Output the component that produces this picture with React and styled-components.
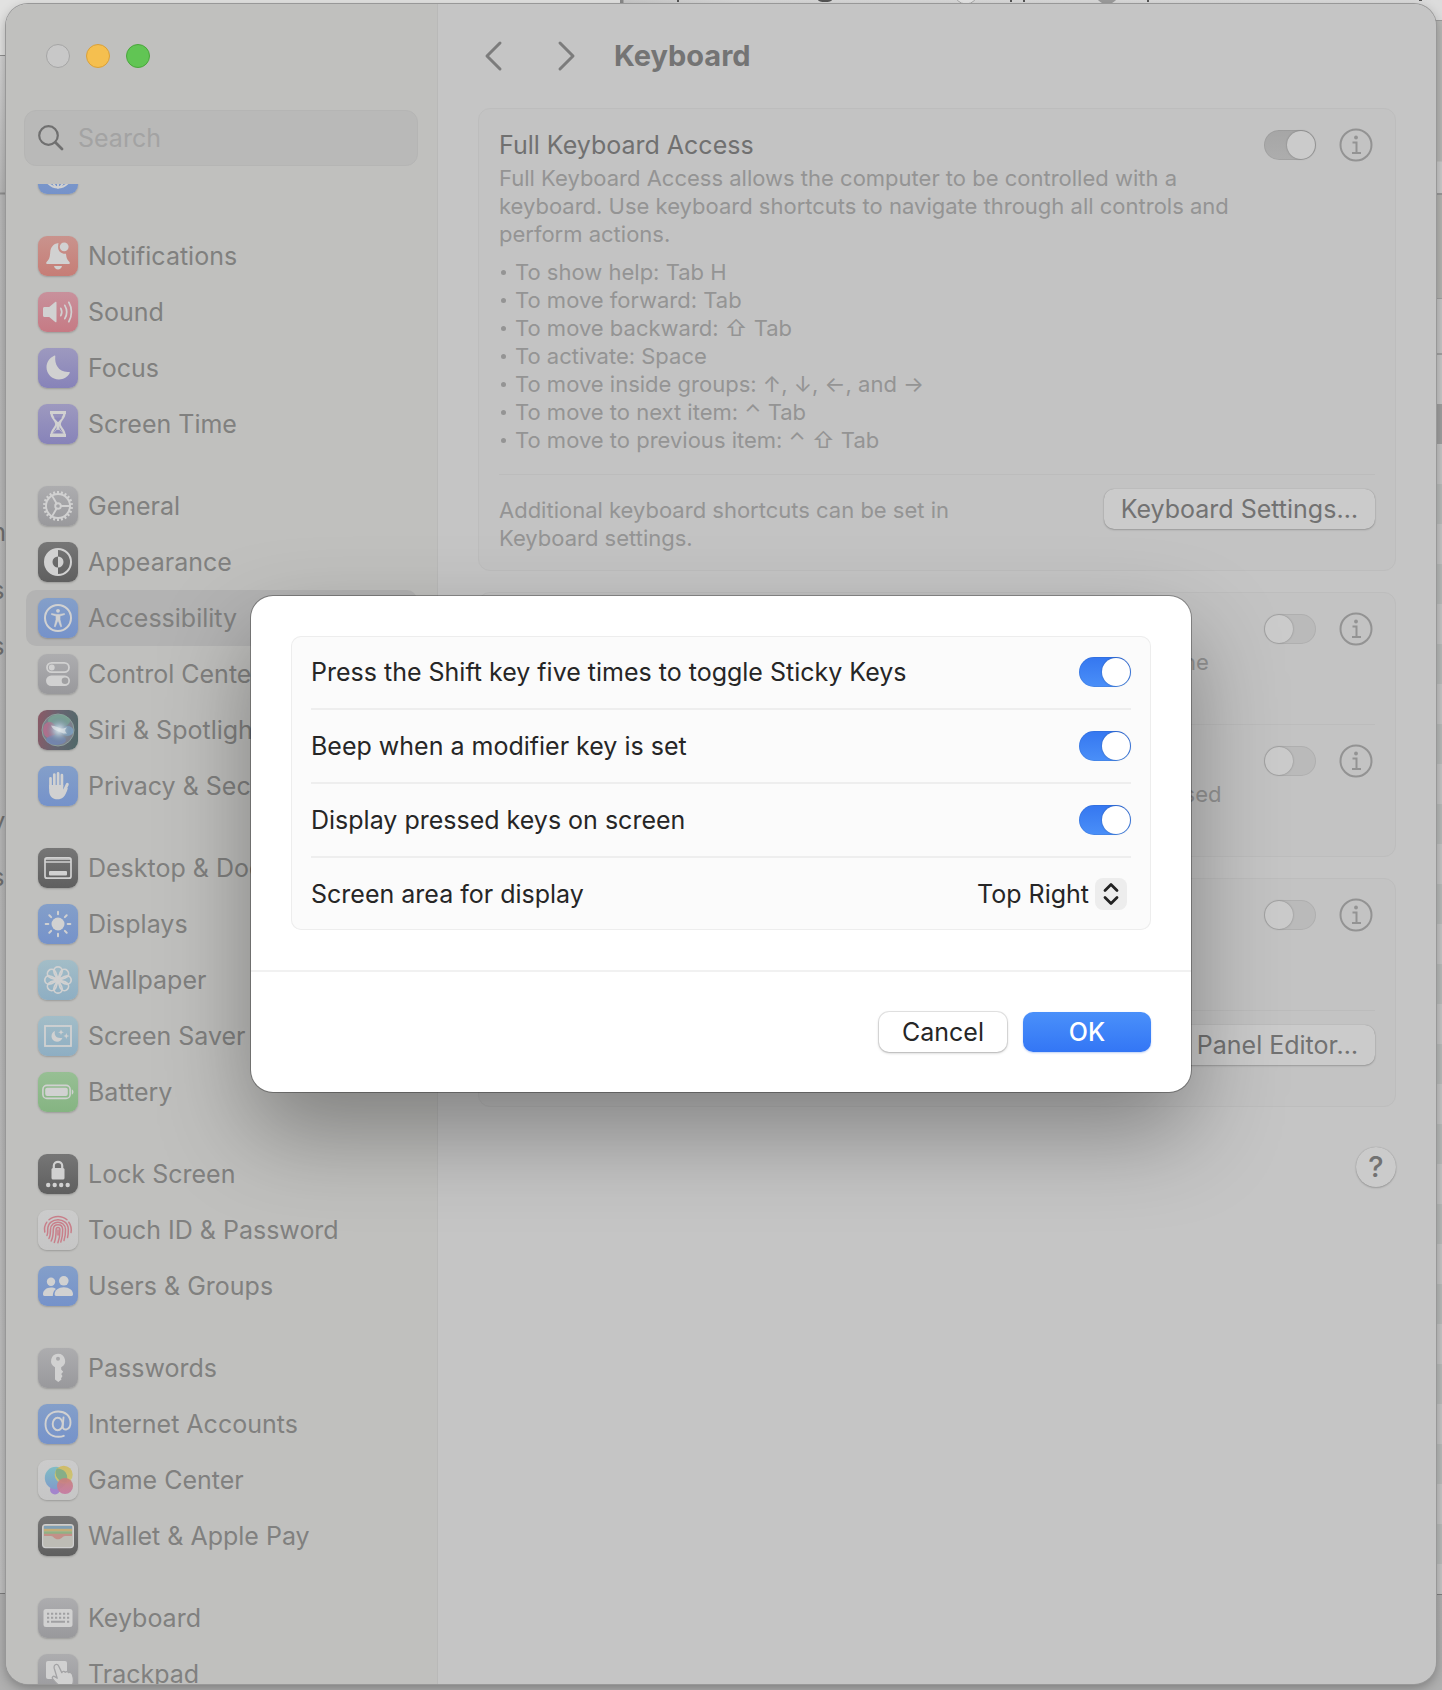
import React from "react";
import styled, { createGlobalStyle, css } from "styled-components";

const GlobalStyle = createGlobalStyle`
  *, *::before, *::after { box-sizing: border-box; }
  html, body { margin: 0; height: 100%; }
  body {
    font-family: Inter, "Liberation Sans", sans-serif;
    font-size: 25px;
    line-height: 30px;
    background: #b4b4b4;
    overflow: hidden;
  }
  button, input, select { font: inherit; }
  h1, h2, p, ul { margin: 0; padding: 0; }
`;

/* ---------- Desktop behind the window ---------- */

const Desktop = styled.div`
  position: relative;
  height: 100vh;
  padding: 4px 6px 6px;
  overflow: hidden;
  background: linear-gradient(#b4b4b4, #b0b0b0);
`;

const BackTop = styled.div`
  position: absolute;
  inset: 0 0 auto 0;
  height: 56px;
  background: linear-gradient(90deg, #e2e2e1 620px, #8a8a8a 620px, #8a8a8a 623px, #cacaca 624px, #d8d8d8 740px, #dcdcdc);
`;

const BackLeft = styled.div`
  position: absolute;
  left: 0;
  top: 55px;
  bottom: 96px;
  width: 40px;
  border-top: 1px solid #8f8f8f;
  border-bottom: 1px solid #7d7d7d;
  background: linear-gradient(#d2d2d2, #b9b9b9 136px, #8f8f8f 137px, #8f8f8f 138px, #bababa 139px, #b6b6b6 700px, #c0c0c0);
`;

const BackRight = styled.div`
  position: absolute;
  right: 0;
  top: 20px;
  bottom: 95px;
  width: 40px;
  border-top: 1px solid #9b9b9b;
  border-bottom: 1px solid #808080;
  background:
    linear-gradient(#b8b8b6 140px, #cbcbcb 141px, #cbcbcb 172px, #999 172px, #999 174px, #b5b5b2 174px,
      #b5b5b2 277px, #a2a2a2 277px, #a2a2a2 278px, #c6c6c6 278px, #c6c6c6 332px, #a2a2a2 332px, #a2a2a2 334px,
      #c8c8c8 334px, #c8c8c8 383px, #a0a0a0 383px, #a0a0a0 423px, transparent 423px),
    repeating-linear-gradient(#c6c6c6 0 40px, #b9bbba 40px 80px) 0 23px;
`;

const BackLetters = styled.div`
  position: absolute;
  left: 0;
  top: 517px;
  width: 6px;
  display: grid;
  grid-template-rows: 58px 56px 56px 119px 56px 30px;
  justify-content: end;
  overflow: hidden;
  color: #70706f;
`;

const BackMarks = styled.svg`
  position: absolute;
  left: 0;
  top: 0;
`;

function Backdrop() {
  return (
    <>
      <BackTop />
      <BackLeft />
      <BackRight />
      <BackLetters aria-hidden="true">
        <span>n</span><span>s</span><span>s</span><span>l</span><span>y</span><span>s</span>
      </BackLetters>
      <BackMarks width="1442" height="5" aria-hidden="true">
        <g fill="#555">
          <rect x="677" width="2" height="2" />
          <rect x="1010" width="2" height="2" />
          <rect x="1023" width="2" height="2" />
          <rect x="1147" width="2" height="2" />
          <rect x="1419" width="3" height="1" />
          <ellipse cx="825" cy="0" rx="7" ry="2" />
        </g>
        <circle cx="966" cy="-8" r="12" fill="#e6e6e6" stroke="#aaa" />
        <circle cx="1107" cy="-8" r="12" fill="#9d9d9d" />
      </BackMarks>
    </>
  );
}

/* ---------- Window ---------- */

const Window = styled.div`
  position: relative;
  display: flex;
  height: 100%;
  border-radius: 22px;
  overflow: hidden;
  background: #c5c5c5;
`;

const Frame = styled.div`
  position: relative;
  height: 100%;
  border-radius: 22px;
  box-shadow: 0 0 0 1px #989898, 0 4px 12px rgba(0, 0, 0, 0.3);
`;

const Sidebar = styled.aside`
  flex: 0 0 432px;
  display: flex;
  flex-direction: column;
  min-width: 0;
  min-height: 0;
  background: #c0c0be;
  border-right: 1px solid #b9b9b8;
`;

const Lights = styled.div`
  display: flex;
  gap: 16px;
  padding: 40px 40px 42px;
`;

const Light = styled.button`
  width: 24px;
  height: 24px;
  padding: 0;
  border-radius: 50%;
  border: 1px solid ${(p) => p.$edge};
  background: ${(p) => p.$fill};
`;

const SearchBox = styled.label`
  display: flex;
  align-items: center;
  gap: 14px;
  height: 56px;
  margin: 0 19px 18px 18px;
  padding: 0 13px;
  border: 1px solid #b5b5b4;
  border-radius: 12px;
  background: #b9b9b8;
  svg { flex: none; }
`;

const SearchInput = styled.input`
  flex: 1;
  min-width: 0;
  padding: 0;
  border: 0;
  outline: 0;
  background: none;
  color: #707070;
  &::placeholder { color: #a3a3a3; opacity: 1; }
`;

const NavScroll = styled.nav`
  flex: 1;
  min-height: 0;
  overflow: hidden;
`;

const NavGroups = styled.div`
  display: flex;
  flex-direction: column;
  gap: 26px;
  margin-top: -38px;
  padding: 0 20px;
`;

const NavGroup = styled.ul`
  list-style: none;
`;

const NavLink = styled.a`
  display: flex;
  align-items: center;
  gap: 10px;
  height: 56px;
  padding: 0 12px;
  border-radius: 10px;
  color: #80807f;
  text-decoration: none;
  white-space: nowrap;
  background: ${(p) => (p.$active ? "#b3b3b3" : "none")};
`;

const tones = {
  red: "linear-gradient(#c9938d, #c67d76)",
  pink: "linear-gradient(#c8919c, #c67a84)",
  violet: "linear-gradient(#9d99bf, #8783b9)",
  grey: "linear-gradient(#adadaf, #99999c)",
  black: "linear-gradient(#767676, #5f5f5f)",
  blue: "linear-gradient(#849fc9, #7592ca)",
  cyan: "linear-gradient(#a3bdc7, #8eaec3)",
  green: "linear-gradient(#97bf94, #85b482)",
  white: "linear-gradient(#cbcbcb, #c6c6c6)",
  siri: "linear-gradient(100deg, #8c5a66, #666571 50%, #4f6868)",
};

const Tile = styled.span`
  flex: none;
  width: 40px;
  height: 40px;
  border-radius: 9px;
  background: ${(p) => tones[p.$tone]};
  box-shadow: 0 1px 2px rgba(0, 0, 0, 0.2);
  svg { display: block; }
`;

/* ---------- Sidebar glyphs, drawn on a 40 × 40 grid ---------- */

const G = "#d1d1d1";
const line = { fill: "none", stroke: G, strokeLinecap: "round", strokeLinejoin: "round" };
const around = (n) => Array.from({ length: n }, (_, i) => (i * 360) / n);

const glyphs = {
  globe: (
    <g {...line} strokeWidth="1.8">
      <circle cx="20" cy="20" r="13.5" />
      <ellipse cx="20" cy="20" rx="6.5" ry="13.5" />
      <path d="M20 6.5v27M6.5 20h27M9 12.5c6 3.500 16 3.500 22 0M9 27.500c6-3.500 16-3.500 22 0" />
    </g>
  ),
  bell: (
    <g fill={G}>
      <path d="M20.500 7c-5.500.7-8 4.500-8.300 9.500-.3 5-1 6.800-3.200 9-1.300 1.300-1 2.500.5 2.500h21c1.500 0 1.800-1.200.5-2.500-1.900-1.900-2.700-3.700-3-7.700-4.300.5-7.700-2.400-7.900-6-.1-2 .2-3.500.4-4.800z" />
      <circle cx="26.200" cy="10.800" r="4.400" />
      <path d="M16 30h8c-.5 2.200-2 3.500-4 3.500S16.500 32.200 16 30z" />
    </g>
  ),
  speaker: (
    <>
      <path fill={G} d="M6.500 15h4.700l6-5c.8-.6 1.300-.3 1.300.6v18.800c0 .9-.5 1.200-1.300.6l-6-5H6.500c-.9 0-1.500-.6-1.500-1.500v-7c0-.9.6-1.500 1.500-1.500z" />
      <path {...line} strokeWidth="1.700" d="M22.800 16.300c1.200 2.200 1.200 5.200 0 7.400M26.800 13.300c2.300 4 2.300 9.400 0 13.400M30.800 10.300c3.500 5.800 3.500 13.600 0 19.400" />
    </>
  ),
  moon: <path fill={G} d="M17.300 8.300c-1 7.500 3.200 16.500 13.700 15.700.7 0 1 .5.700 1.100C29.700 29 25.600 31.500 21 31.500c-6.900 0-12.500-5.400-12.500-12.200 0-4.800 2.900-9.300 7.600-11.500.8-.4 1.300-.1 1.200.5z" />,
  hourglass: (
    <>
      <path fill="none" stroke={G} strokeWidth="2.200" strokeLinejoin="round" d="M13.500 8.500h13c.5 5.500-4.800 7.500-4.800 11.500s5.300 6 4.800 11.500h-13c-.5-5.500 4.800-7.500 4.800-11.500s-5.300-6-4.800-11.500z" />
      <path fill={G} d="M12 7h16v3H12zM12 30h16v3H12zM15 14h10l-3.500 4.500V25l4.500 5.500H14l4.500-5.500v-6.500z" />
      <path fill="#8d89ba" d="M15.800 13.800h8.400L20 18.200zM20 24.500l5 5H15z" />
      <path stroke={G} strokeWidth="1.600" d="M20 18v8" />
    </>
  ),
  gear: (
    <g {...line} strokeWidth="1.900">
      <circle cx="20" cy="20" r="12" />
      <circle cx="20" cy="20" r="2.800" />
      {around(22).map((a) => <path key={a} strokeWidth="2" strokeLinecap="butt" d="M20 5v3" transform={`rotate(${a} 20 20)`} />)}
      {[90, 210, 330].map((a) => <path key={a} d="M20 17.200V8" transform={`rotate(${a} 20 20)`} />)}
    </g>
  ),
  appearance: (
    <>
      <circle cx="20" cy="20" r="13" fill="none" stroke={G} strokeWidth="2" />
      <path fill={G} d="M20 7a13 13 0 0 0 0 26v-7.500a5.500 5.500 0 0 1 0-11z" />
      <path fill={G} d="M20 14.500a5.500 5.500 0 0 1 0 11z" />
    </>
  ),
  person: (
    <>
      <circle cx="20" cy="20" r="13" fill="none" stroke={G} strokeWidth="2" />
      <circle cx="20" cy="12.800" r="1.900" fill={G} />
      <path fill={G} stroke={G} strokeWidth=".6" strokeLinejoin="round" d="M13.500 15.600l5 .8h3l5-.8.1 1-4.600 1.300v3.800l1.700 6.800-1 .3-2.400-6h-.6l-2.400 6-1-.3 1.700-6.800v-3.800l-4.600-1.300z" />
    </>
  ),
  switches: (
    <>
      <rect x="9" y="8.800" width="22" height="9.400" rx="4.700" fill="none" stroke={G} strokeWidth="1.800" />
      <circle cx="13.800" cy="13.500" r="2.900" fill={G} />
      <rect x="8" y="21.500" width="24" height="10.500" rx="5.250" fill={G} />
      <circle cx="27" cy="26.700" r="3.300" fill="#a0a0a2" />
    </>
  ),
  siri: (
    <>
      <defs>
        <radialGradient id="orb"><stop offset="0" stopColor="#e0eaf0" /><stop offset=".4" stopColor="#a6b8c8" stopOpacity=".85" /><stop offset="1" stopColor="#6b8497" stopOpacity="0" /></radialGradient>
      </defs>
      <circle cx="20" cy="20" r="16" fill="#7d808c" stroke="#8da09c" strokeWidth="1" />
      <ellipse cx="21" cy="11" rx="11" ry="6.500" fill="#78ab96" opacity=".7" />
      <ellipse cx="11.500" cy="20" rx="6.500" ry="8" fill="#c2698b" opacity=".7" />
      <ellipse cx="18" cy="30" rx="10" ry="5" fill="#6f87bd" opacity=".65" />
      <ellipse cx="29.500" cy="21" rx="6" ry="5" fill="#7da3c4" opacity=".8" />
      <circle cx="21" cy="20" r="13" fill="url(#orb)" />
      <path fill="#dfe6e8" d="M13 15.500c5 .5 7 2 10 3 3 .5 4-1 6-1-2.500 1.800-2.500 4 0 6-4 .5-5.500-1-8-2-4-1.500-6-2-8-6z" opacity=".7" />
    </>
  ),
  hand: (
    <g {...line}>
      <path strokeWidth="2.700" d="M12.500 22V12.300M16.300 20V8.600M20.100 20V7.400M23.900 20V9.200" />
      <path strokeWidth="3" d="M29.300 18.300l-3.500 7.500" />
      <path fill={G} stroke="none" d="M11.150 19h14.100v4.500l4.700-1.500c-1.300 4-2.700 7.500-4.700 9.300-1.600 1.400-3.500 2-5.500 2-5.500 0-8.600-3.300-8.600-8.800z" />
    </g>
  ),
  dock: (
    <>
      <rect x="7" y="9.800" width="26" height="20.400" rx="2" fill="none" stroke={G} strokeWidth="1.700" />
      <path d="M7 11.200h26M7 14h26" stroke={G} strokeWidth="1.300" />
      <rect x="11" y="23" width="18" height="4.500" rx="1" fill={G} />
    </>
  ),
  sun: (
    <>
      <circle cx="20" cy="20" r="6.500" fill={G} />
      {around(8).map((a) => <path key={a} {...line} strokeWidth="2" d="M20 7.700v2.600" transform={`rotate(${a} 20 20)`} />)}
    </>
  ),
  flower: (
    <g fill="none" stroke={G} strokeWidth="1.700">
      {around(8).map((a) => <path key={a} d="M20 20c-1.200-3-4.200-5.300-4.200-9a4.200 4.200 0 0 1 8.400 0c0 3.700-3 6-4.200 9z" transform={`rotate(${a} 20 20)`} />)}
      <circle cx="20" cy="20" r="2.600" />
    </g>
  ),
  saver: (
    <>
      <rect x="7" y="10" width="26" height="20" fill="none" stroke={G} strokeWidth="1.800" />
      <path fill={G} d="M17 15c-1.500 5 2.500 8 7.500 6.700-1 2.500-3 4-5.400 4-3.300 0-5.600-2.400-5.600-5.400 0-2.400 1.300-4.400 3.500-5.300zM23 13.500l.8 2 2 .8-2 .8-.8 2-.8-2-2-.8 2-.8zM28.300 17l.8 2.200 2.200.8-2.200.8-.8 2.200-.8-2.200-2.200-.8 2.200-.8z" />
    </>
  ),
  battery: (
    <>
      <rect x="4.900" y="13.400" width="27.200" height="13" rx="4" fill="none" stroke={G} strokeWidth="1.600" />
      <rect x="7.200" y="15.700" width="22.600" height="8.400" rx="2" fill={G} />
      <path fill={G} d="M33.800 17.500c2.200.6 2.200 4.400 0 5z" />
    </>
  ),
  lock: (
    <>
      <path d="M15.800 15v-3.200c0-5.200 8.400-5.200 8.400 0V15" fill="none" stroke={G} strokeWidth="2.200" />
      <rect x="13.500" y="14" width="13" height="11.500" rx="1.600" fill={G} />
      {[10.200, 16.700, 23.200, 29.700].map((x) => <circle key={x} cx={x} cy="31" r="2.200" fill={G} />)}
    </>
  ),
  finger: (
    <g fill="none" stroke="#c87f8a" strokeWidth="1.500" strokeLinecap="round">
      <path d="M11 9.800c5-4.500 13-4.500 18 0M6.800 22c-.8-3.600.1-7 2-9.800M33 22.500c.8-3.800-.2-7.400-2.200-10.300" />
      <path d="M9 25.500c.8-2 .8-4 .7-6C9.900 6.500 30.100 6.500 30.300 19.500c.1 3-.1 5.500-.8 8" />
      <path d="M11 28.500c1.500-3 1.500-6 1.500-9C12.700 9.800 27.300 9.800 27.500 19.500c.1 4-.3 7.500-1.500 11" />
      <path d="M13.200 31c1.800-3.700 2.100-7.500 2.100-11.500.2-6.200 9.200-6.200 9.400 0 .1 4.500-.5 8.500-1.900 12.500" />
      <path d="M16.300 32.500c1.600-4 1.800-8.500 1.800-13 .2-2.600 3.600-2.600 3.800 0 .1 4.500-.3 9-2 13.300M20 20v5" />
    </g>
  ),
  users: (
    <g fill={G}>
      <circle cx="13" cy="15.700" r="4.200" />
      <path d="M5 28.300c0-4 3.500-6.800 8-6.800 2 0 3.600.5 4.900 1.400-2 1.600-3 3.600-3.100 7.100H6.500c-1 0-1.500-.6-1.500-1.700z" />
      <circle cx="25.800" cy="14.800" r="4.800" />
      <path d="M16.600 28.300c0-4 4-7 9.200-7s9.200 3 9.200 7c0 1.100-.5 1.700-1.500 1.700H18.100c-1 0-1.500-.6-1.500-1.700z" />
    </g>
  ),
  key: (
    <path fill={G} fillRule="evenodd" d="M20 5.700a7.200 7.200 0 0 1 3.200 13.600v2.200l2 2.200-2 2.300 1.300 2-1.500 2.500.5 1L20.300 34 17 31.500V19.300A7.200 7.200 0 0 1 20 5.700zm0 3a2 2 0 1 0 0 4 2 2 0 0 0 0-4z" />
  ),
  at: (
    <g {...line} strokeWidth="1.900">
      <ellipse cx="19.700" cy="20" rx="5" ry="6.300" />
      <path d="M25.500 13.500l-.8 9c-.2 4.500 7.800 4.300 7.800-4 0-6.800-5.200-11-12.300-11C12.700 7.500 7.500 12.600 7.500 20.300c0 7.500 5 12.500 12.800 12.500 2.200 0 4-.3 5.500-1" />
    </g>
  ),
  game: (
    <>
      <defs>
        <linearGradient id="gb" x2="0" y2="1"><stop stopColor="#80bdc5" /><stop offset="1" stopColor="#7f9dca" /></linearGradient>
        <linearGradient id="gy" x2="0" y2="1"><stop stopColor="#d0bb68" /><stop offset="1" stopColor="#c9c87a" /></linearGradient>
        <linearGradient id="gr" x2="0" y2="1"><stop stopColor="#ca8179" /><stop offset="1" stopColor="#c579a3" /></linearGradient>
      </defs>
      <circle cx="17" cy="29.500" r="5" fill="#a385cc" />
      <circle cx="18" cy="18" r="11.200" fill="url(#gb)" />
      <circle cx="25.700" cy="14.700" r="9" fill="url(#gy)" />
      <path d="M27.500 12.200a11.200 11.200 0 0 1 1.100 9.500 9 9 0 0 1-9.800-13.200 11.200 11.200 0 0 1 8.700 3.700z" fill="#86ae87" />
      <circle cx="27" cy="26" r="8" fill="url(#gr)" opacity=".93" />
    </>
  ),
  wallet: (
    <>
      <rect x="4.600" y="8.600" width="30.800" height="23" rx="3" fill="#bdbcb5" stroke="#cfcfcf" strokeWidth="1.200" />
      <path fill="#7f9fb4" d="M6 10h28v3H6z" />
      <path fill="#c4ad77" d="M6 12.800h28v2.800H6z" />
      <path fill="#8fb284" d="M6 15.400h28V18H6z" />
      <path fill="#c39088" d="M6 17.800h28V20h-7c-2.500 0-3.200 3.300-7 3.300S15.500 20 13 20H6z" />
    </>
  ),
  keyboard: (
    <>
      <rect x="5.500" y="11" width="29" height="18" rx="2.500" fill={G} />
      <path stroke="#a0a0a2" strokeWidth="2" strokeDasharray="2.200 1.800" d="M9 15.800h22.200M9 19.800h22.200" />
      <path stroke="#a0a0a2" strokeWidth="2" d="M9 23.800h2.200M13 23.800h14M29 23.800h2.200" />
    </>
  ),
  trackpad: (
    <>
      <rect x="8" y="7" width="21" height="18" rx="2" fill={G} />
      <path fill={G} stroke="#a3a3a5" strokeWidth="1.300" strokeLinejoin="round" d="M16.500 11.500c1-1.800 3.200-1.500 4 .3l3.300 6.800c.8-1.600 2.600-1.600 3.500-.3 1-1.200 2.700-.9 3.300.3 1.300-.7 3.200 0 3.800 2 1.600 5 1.300 9.400-1.400 12.400H23c-4-3-6.500-5.500-8.500-8.500-.7-1.500.7-2.800 2.300-1.900l2.400 1.600-3-10c-.2-1-.1-2 .3-2.700z" />
    </>
  ),
};

const groups = [
  [["Network", "blue", "globe"]],
  [["Notifications", "red", "bell"], ["Sound", "pink", "speaker"], ["Focus", "violet", "moon"], ["Screen Time", "violet", "hourglass"]],
  [["General", "grey", "gear"], ["Appearance", "black", "appearance"], ["Accessibility", "blue", "person"], ["Control Center", "grey", "switches"], ["Siri & Spotlight", "siri", "siri"], ["Privacy & Security", "blue", "hand"]],
  [["Desktop & Dock", "black", "dock"], ["Displays", "blue", "sun"], ["Wallpaper", "cyan", "flower"], ["Screen Saver", "cyan", "saver"], ["Battery", "green", "battery"]],
  [["Lock Screen", "black", "lock"], ["Touch ID & Password", "white", "finger"], ["Users & Groups", "blue", "users"]],
  [["Passwords", "grey", "key"], ["Internet Accounts", "blue", "at"], ["Game Center", "white", "game"], ["Wallet & Apple Pay", "black", "wallet"]],
  [["Keyboard", "grey", "keyboard"], ["Trackpad", "grey", "trackpad"]],
];

/* ---------- Content pane ---------- */

const Content = styled.main`
  flex: 1;
  min-width: 0;
  padding: 0 40px;
  color: #707070;
`;

const Header = styled.header`
  display: flex;
  align-items: center;
  height: 104px;
`;

const NavButton = styled.button`
  width: 72px;
  height: 36px;
  padding: 0 0 0 6px;
  border: 0;
  background: none;
  text-align: left;
  svg { display: block; }
`;

const Title = styled.h1`
  margin-left: -8px;
  font-size: 29px;
  line-height: 36px;
  font-weight: 700;
  color: #747474;
`;

const Cards = styled.div`
  display: flex;
  flex-direction: column;
  gap: 21px;
`;

const Card = styled.section`
  padding: 0 20px;
  border: 1px solid #bdbdbd;
  border-radius: 12px;
  background: #c3c3c3;
`;

const Setting = styled.div`
  display: flex;
  align-items: flex-start;
  padding: 21px 0 20px;
  & + & { border-top: 1px solid #bcbcbc; }
`;

const SettingText = styled.div`
  flex: 1;
  min-width: 0;
`;

const SettingName = styled.label`
  display: block;
  margin-bottom: 4px;
`;

const small = css`
  font-size: 22px;
  line-height: 28px;
  color: #949494;
`;

const Note = styled.p`
  ${small}
  max-width: 750px;
`;

const Keys = styled.ul`
  ${small}
  margin-top: 10px;
  list-style: none;
  li {
    display: flex;
    align-items: center;
    gap: 9px;
    padding-left: 2px;
  }
  li::before {
    content: "";
    width: 5px;
    height: 5px;
    border-radius: 50%;
    background: #949494;
  }
`;

const Controls = styled.div`
  display: flex;
  align-items: center;
  gap: 22px;
  height: 30px;
  padding-right: 1px;
`;

const Switch = styled.input`
  appearance: none;
  flex: none;
  width: 52px;
  height: 30px;
  margin: 0;
  padding: 1px;
  border-radius: 15px;
  background: ${(p) => (p.$dim ? "#bababa" : "#e4e4e4")};
  box-shadow: inset 0 0 0 1px rgba(0, 0, 0, 0.06);
  &::before {
    content: "";
    display: block;
    width: 28px;
    height: 28px;
    border-radius: 50%;
    background: ${(p) => (p.$dim ? "#cbcbcb" : "#fff")};
    box-shadow: 0 0 2px rgba(0, 0, 0, 0.3);
  }
  &:checked { background: ${(p) => (p.$dim ? "linear-gradient(#a6a6a6, #adadad)" : "linear-gradient(#3577f0, #4a8ff8)")}; }
  &:checked::before { margin-left: 22px; }
`;

const InfoButton = styled.button`
  width: 36px;
  height: 36px;
  padding: 0;
  border: 0;
  background: none;
  svg { display: block; }
`;

const CardFooter = styled.div`
  display: flex;
  align-items: flex-start;
  justify-content: space-between;
  height: 96px;
  padding-top: 14px;
  border-top: 1px solid #bcbcbc;
`;

const FooterNote = styled(Note)`
  max-width: 500px;
  padding-top: 7px;
`;

const DimButton = styled.button`
  height: 40px;
  padding: 0 17px;
  border: 0;
  border-radius: 10px;
  background: #cbcbcb;
  box-shadow: 0 0 1px rgba(0, 0, 0, 0.25), 0 1px 2px rgba(0, 0, 0, 0.2);
  color: #727272;
  line-height: 38px;
  white-space: nowrap;
`;

const HelpRow = styled.div`
  display: flex;
  justify-content: flex-end;
  padding-top: 40px;
`;

const HelpButton = styled(DimButton)`
  width: 40px;
  padding: 0;
  border-radius: 50%;
  font-size: 29px;
  font-weight: 500;
`;

/* ---------- Dialog ---------- */

const Overlay = styled.div`
  position: absolute;
  inset: 0;
  display: grid;
  place-items: center;
`;

const Dialog = styled.form`
  width: 940px;
  max-width: calc(100% - 40px);
  border-radius: 22px;
  background: #fff;
  box-shadow: 0 0 0 1px rgba(0, 0, 0, 0.3), 0 40px 90px rgba(0, 0, 0, 0.34);
  color: #262626;
`;

const DialogBody = styled.div`
  padding: 40px;
  border-bottom: 2px solid #f1f1f1;
`;

const Panel = styled.div`
  padding: 0 20px;
  border-radius: 10px;
  background: #fbfbfb;
  box-shadow: inset 0 0 0 1px #ededed;
`;

const Row = styled.div`
  display: flex;
  align-items: center;
  justify-content: space-between;
  height: 74px;
  border-bottom: 2px solid #eeeeee;
  &:last-child { height: 72px; border-bottom: 0; }
`;

const Picker = styled.div`
  position: relative;
  display: flex;
  align-items: center;
  padding-right: 4px;
`;

const Select = styled.select`
  appearance: none;
  height: 32px;
  padding: 0 38px 0 0;
  border: 0;
  outline: 0;
  background: none;
  color: inherit;
  text-align-last: right;
`;

const Stepper = styled.span`
  position: absolute;
  right: 4px;
  width: 32px;
  height: 32px;
  border-radius: 8px;
  background: #ededed;
  pointer-events: none;
  svg { display: block; }
`;

const Actions = styled.div`
  display: flex;
  justify-content: flex-end;
  gap: 16px;
  padding: 40px;
`;

const Action = styled.button`
  width: 128px;
  height: 40px;
  padding: 0;
  border: 0;
  border-radius: 10px;
  line-height: 38px;
  ${(p) =>
    p.$primary
      ? css`
          background: linear-gradient(#4a90fa, #3376f5);
          color: #fff;
          font-weight: 500;
          box-shadow: 0 1px 2px rgba(40, 100, 220, 0.3);
        `
      : css`
          background: #fff;
          color: #262626;
          box-shadow: 0 0 0 1px rgba(0, 0, 0, 0.09), 0 1px 3px rgba(0, 0, 0, 0.25);
        `}
`;

function Chevron({ back }) {
  return (
    <svg width="20" height="36" viewBox="0 0 20 36" fill="none" stroke="#7c7c7c" strokeWidth="3" strokeLinecap="round" strokeLinejoin="round">
      <path d={back ? "M16 5L3 18l13 13" : "M4 5l13 13L4 31"} />
    </svg>
  );
}

function Info({ about }) {
  return (
    <InfoButton type="button" aria-label={`About ${about}`}>
      <svg width="36" height="36" viewBox="0 0 36 36" fill="none" stroke="#939393" strokeWidth="2">
        <circle cx="18" cy="18" r="15.500" />
        <circle cx="18" cy="10.500" r="1.900" fill="#939393" stroke="none" />
        <path d="M14.500 15.500h4V26M14 26h9" />
      </svg>
    </InfoButton>
  );
}

function SettingRow({ id, name, on, children }) {
  return (
    <Setting>
      <SettingText>
        <SettingName htmlFor={id}>{name}</SettingName>
        {children}
      </SettingText>
      <Controls>
        <Switch $dim id={id} type="checkbox" role="switch" defaultChecked={on} />
        <Info about={name} />
      </Controls>
    </Setting>
  );
}

const shortcuts = [
  "To show help: Tab H",
  "To move forward: Tab",
  "To move backward: ⇧ Tab",
  "To activate: Space",
  "To move inside groups: ↑, ↓, ←, and →",
  "To move to next item: ⌃ Tab",
  "To move to previous item: ⌃ ⇧ Tab",
];

const options = [
  ["shift", "Press the Shift key five times to toggle Sticky Keys"],
  ["beep", "Beep when a modifier key is set"],
  ["pressed", "Display pressed keys on screen"],
];

export default function App() {
  return (
    <Desktop>
      <GlobalStyle />
      <Backdrop />
      <Frame>
        <Window>
          <Sidebar>
            <Lights>
              <Light aria-label="Close" $fill="#c8c8c8" $edge="#a5a5a5" />
              <Light aria-label="Minimize" $fill="#f5bf4f" $edge="#d9a03a" />
              <Light aria-label="Zoom" $fill="#61c554" $edge="#4aa63c" />
            </Lights>
            <SearchBox>
              <svg width="26" height="26" viewBox="0 0 26 26" fill="none" stroke="#707070" strokeLinecap="round">
                <circle cx="10.500" cy="10.500" r="9.300" strokeWidth="2.200" />
                <path d="M17.500 17.500l6.500 6.500" strokeWidth="2.800" />
              </svg>
              <SearchInput type="search" placeholder="Search" aria-label="Search" />
            </SearchBox>
            <NavScroll>
              <NavGroups>
                {groups.map((items) => (
                  <NavGroup key={items[0][0]}>
                    {items.map(([name, tone, glyph]) => (
                      <li key={name}>
                        <NavLink href="#" $active={name === "Accessibility"}>
                          <Tile $tone={tone}>
                            <svg width="40" height="40" viewBox="0 0 40 40" aria-hidden="true">{glyphs[glyph]}</svg>
                          </Tile>
                          {name}
                        </NavLink>
                      </li>
                    ))}
                  </NavGroup>
                ))}
              </NavGroups>
            </NavScroll>
          </Sidebar>

          <Content>
            <Header>
              <NavButton aria-label="Back"><Chevron back /></NavButton>
              <NavButton aria-label="Forward"><Chevron /></NavButton>
              <Title>Keyboard</Title>
            </Header>
            <Cards>
              <Card>
                <SettingRow id="full" name="Full Keyboard Access" on>
                  <Note>
                    Full Keyboard Access allows the computer to be controlled with a keyboard. Use keyboard
                    shortcuts to navigate through all controls and perform actions.
                  </Note>
                  <Keys>{shortcuts.map((s) => <li key={s}>{s}</li>)}</Keys>
                </SettingRow>
                <CardFooter>
                  <FooterNote>Additional keyboard shortcuts can be set in Keyboard settings.</FooterNote>
                  <DimButton>Keyboard Settings…</DimButton>
                </CardFooter>
              </Card>
              <Card>
                <SettingRow id="sticky" name="Sticky Keys">
                  <Note>Sticky Keys allows modifier keys to be set without having to hold the key down.</Note>
                </SettingRow>
                <SettingRow id="slow" name="Slow Keys">
                  <Note>Slow Keys adjusts the amount of time between when a key is pressed and when it is activated.</Note>
                </SettingRow>
              </Card>
              <Card>
                <SettingRow id="onscreen" name="Accessibility Keyboard">
                  <Note>
                    The Accessibility Keyboard allows macOS to be used
                    <br />
                    without a hardware keyboard.
                  </Note>
                </SettingRow>
                <CardFooter>
                  <span />
                  <DimButton>Panel Editor…</DimButton>
                </CardFooter>
              </Card>
            </Cards>
            <HelpRow><HelpButton aria-label="Help">?</HelpButton></HelpRow>
          </Content>
        </Window>

        <Overlay>
          <Dialog role="dialog" aria-label="Sticky Keys" onSubmit={(e) => e.preventDefault()}>
            <DialogBody>
              <Panel>
                {options.map(([id, text]) => (
                  <Row key={id}>
                    <label htmlFor={id}>{text}</label>
                    <Switch id={id} type="checkbox" role="switch" defaultChecked />
                  </Row>
                ))}
                <Row>
                  <label htmlFor="area">Screen area for display</label>
                  <Picker>
                    <Select id="area" defaultValue="Top Right">
                      <option>Top Left</option>
                      <option>Top Right</option>
                      <option>Bottom Left</option>
                      <option>Bottom Right</option>
                    </Select>
                    <Stepper>
                      <svg width="32" height="32" viewBox="0 0 32 32" fill="none" stroke="#222" strokeWidth="2.800" strokeLinecap="round" strokeLinejoin="round">
                        <path d="M10 12.500l6-6 6 6M10 19.500l6 6 6-6" />
                      </svg>
                    </Stepper>
                  </Picker>
                </Row>
              </Panel>
            </DialogBody>
            <Actions>
              <Action type="button">Cancel</Action>
              <Action $primary type="submit">OK</Action>
            </Actions>
          </Dialog>
        </Overlay>
      </Frame>
    </Desktop>
  );
}
